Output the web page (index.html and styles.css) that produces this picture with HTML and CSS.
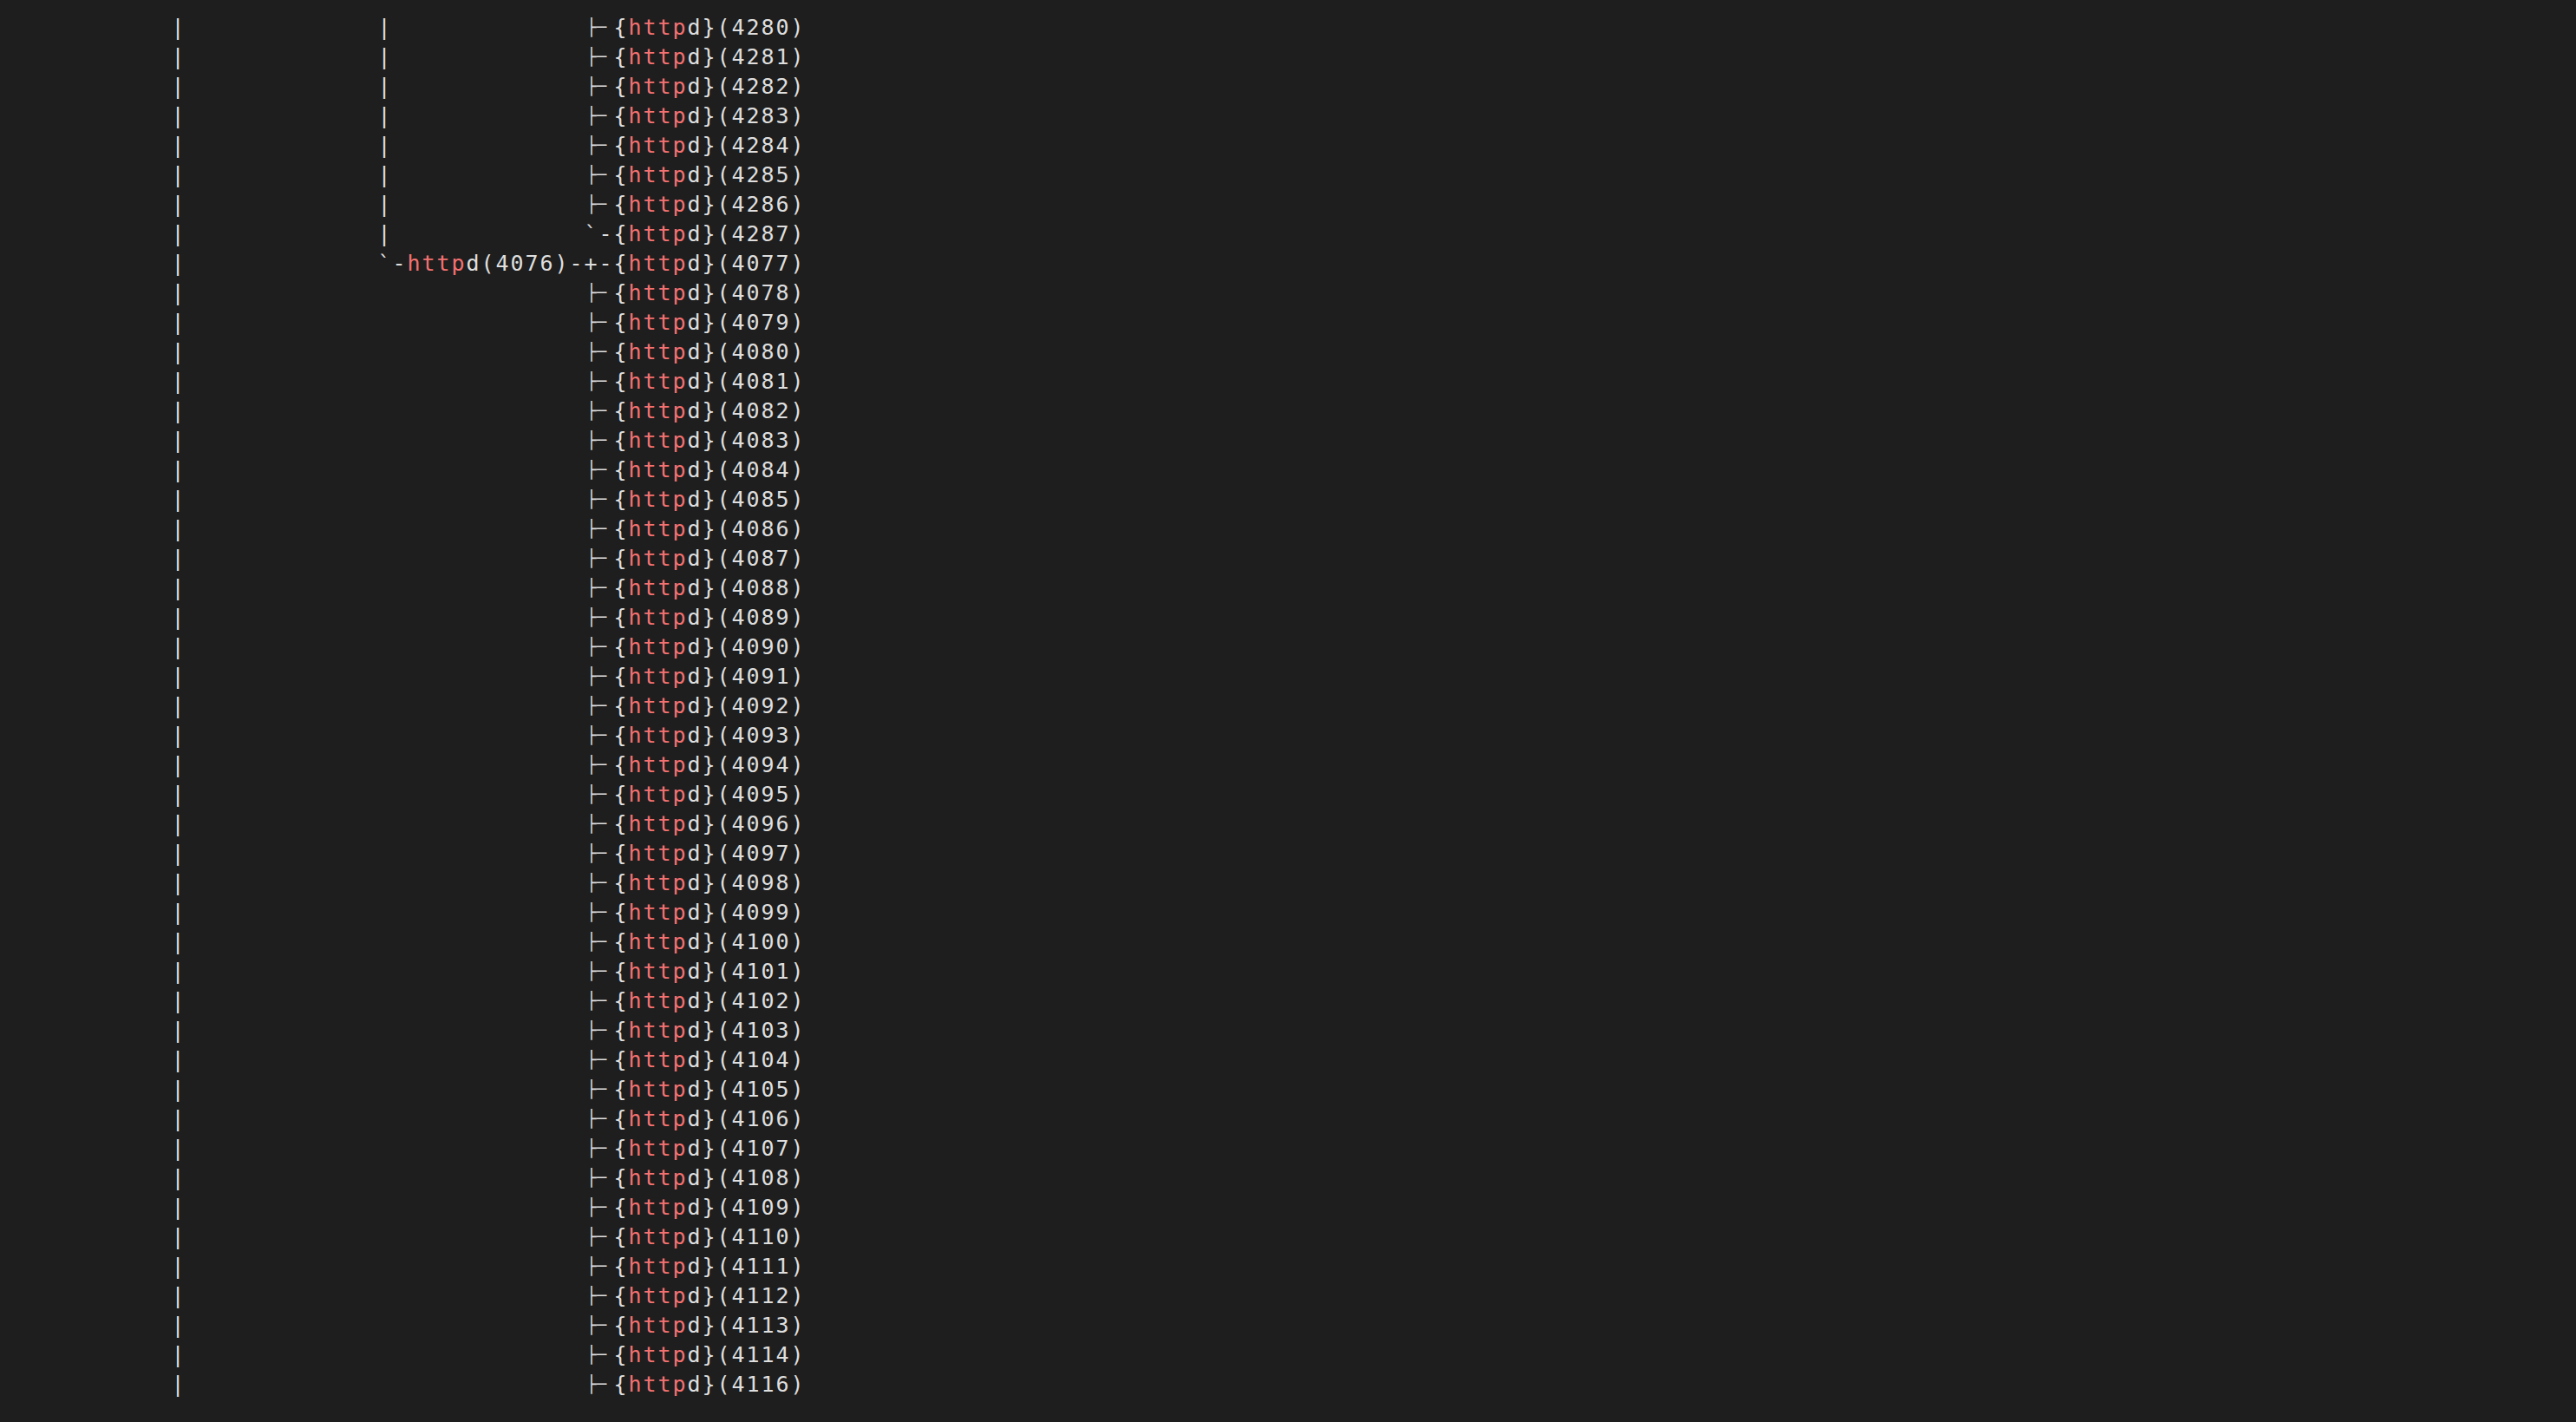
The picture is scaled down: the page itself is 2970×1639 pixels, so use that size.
FILE: index.html
```html
<!DOCTYPE html>
<html lang="en">
<head>
<meta charset="utf-8">
<title>pstree</title>
<link rel="stylesheet" href="styles.css">
</head>
<body>
<pre class="term">           |             |             <span class="tee">├─</span>{<span class="m">http</span>d}(4280)
           |             |             <span class="tee">├─</span>{<span class="m">http</span>d}(4281)
           |             |             <span class="tee">├─</span>{<span class="m">http</span>d}(4282)
           |             |             <span class="tee">├─</span>{<span class="m">http</span>d}(4283)
           |             |             <span class="tee">├─</span>{<span class="m">http</span>d}(4284)
           |             |             <span class="tee">├─</span>{<span class="m">http</span>d}(4285)
           |             |             <span class="tee">├─</span>{<span class="m">http</span>d}(4286)
           |             |             `-{<span class="m">http</span>d}(4287)
           |             `-<span class="m">http</span>d(4076)-+-{<span class="m">http</span>d}(4077)
           |                           <span class="tee">├─</span>{<span class="m">http</span>d}(4078)
           |                           <span class="tee">├─</span>{<span class="m">http</span>d}(4079)
           |                           <span class="tee">├─</span>{<span class="m">http</span>d}(4080)
           |                           <span class="tee">├─</span>{<span class="m">http</span>d}(4081)
           |                           <span class="tee">├─</span>{<span class="m">http</span>d}(4082)
           |                           <span class="tee">├─</span>{<span class="m">http</span>d}(4083)
           |                           <span class="tee">├─</span>{<span class="m">http</span>d}(4084)
           |                           <span class="tee">├─</span>{<span class="m">http</span>d}(4085)
           |                           <span class="tee">├─</span>{<span class="m">http</span>d}(4086)
           |                           <span class="tee">├─</span>{<span class="m">http</span>d}(4087)
           |                           <span class="tee">├─</span>{<span class="m">http</span>d}(4088)
           |                           <span class="tee">├─</span>{<span class="m">http</span>d}(4089)
           |                           <span class="tee">├─</span>{<span class="m">http</span>d}(4090)
           |                           <span class="tee">├─</span>{<span class="m">http</span>d}(4091)
           |                           <span class="tee">├─</span>{<span class="m">http</span>d}(4092)
           |                           <span class="tee">├─</span>{<span class="m">http</span>d}(4093)
           |                           <span class="tee">├─</span>{<span class="m">http</span>d}(4094)
           |                           <span class="tee">├─</span>{<span class="m">http</span>d}(4095)
           |                           <span class="tee">├─</span>{<span class="m">http</span>d}(4096)
           |                           <span class="tee">├─</span>{<span class="m">http</span>d}(4097)
           |                           <span class="tee">├─</span>{<span class="m">http</span>d}(4098)
           |                           <span class="tee">├─</span>{<span class="m">http</span>d}(4099)
           |                           <span class="tee">├─</span>{<span class="m">http</span>d}(4100)
           |                           <span class="tee">├─</span>{<span class="m">http</span>d}(4101)
           |                           <span class="tee">├─</span>{<span class="m">http</span>d}(4102)
           |                           <span class="tee">├─</span>{<span class="m">http</span>d}(4103)
           |                           <span class="tee">├─</span>{<span class="m">http</span>d}(4104)
           |                           <span class="tee">├─</span>{<span class="m">http</span>d}(4105)
           |                           <span class="tee">├─</span>{<span class="m">http</span>d}(4106)
           |                           <span class="tee">├─</span>{<span class="m">http</span>d}(4107)
           |                           <span class="tee">├─</span>{<span class="m">http</span>d}(4108)
           |                           <span class="tee">├─</span>{<span class="m">http</span>d}(4109)
           |                           <span class="tee">├─</span>{<span class="m">http</span>d}(4110)
           |                           <span class="tee">├─</span>{<span class="m">http</span>d}(4111)
           |                           <span class="tee">├─</span>{<span class="m">http</span>d}(4112)
           |                           <span class="tee">├─</span>{<span class="m">http</span>d}(4113)
           |                           <span class="tee">├─</span>{<span class="m">http</span>d}(4114)
           |                           <span class="tee">├─</span>{<span class="m">http</span>d}(4116)</pre>
</body>
</html>
```

FILE: styles.css
```css
html, body {
  margin: 0;
  background: #1e1e1e;
}

.term {
  margin: 0;
  padding: 14.5px 0 0 10.5px;
  font-family: "DejaVu Sans Mono", "Liberation Mono", monospace;
  font-size: 25px;
  line-height: 34px;
  letter-spacing: 1.95px;
  color: #dedede;
}

.m {
  color: #f47171;
}

.tee {
  display: inline-block;
  width: 34px;
  box-sizing: border-box;
  padding-left: 2.8px;
  font-size: 19px;
  line-height: 24px;
  letter-spacing: 0;
  vertical-align: 2px;
}
```
